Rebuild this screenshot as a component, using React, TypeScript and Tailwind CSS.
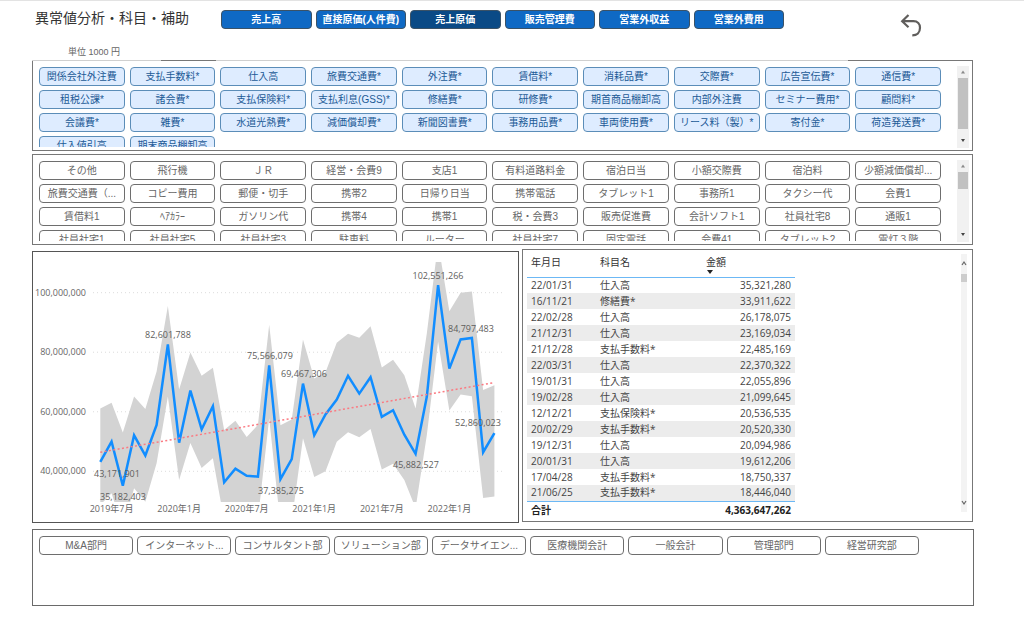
import React, { useState } from "react";

const categories = ["売上高", "直接原価(人件費)", "売上原価", "販売管理費", "営業外収益", "営業外費用"];

const accounts = [
  "関係会社外注費", "支払手数料*", "仕入高", "旅費交通費*", "外注費*", "賃借料*", "消耗品費*", "交際費*", "広告宣伝費*", "通信費*",
  "租税公課*", "諸会費*", "支払保険料*", "支払利息(GSS)*", "修繕費*", "研修費*", "期首商品棚卸高", "内部外注費", "セミナー費用*", "顧問料*",
  "会議費*", "雑費*", "水道光熱費*", "減価償却費*", "新聞図書費*", "事務用品費*", "車両使用費*", "リース料（製）*", "寄付金*", "荷造発送費*",
  "仕入値引高", "期末商品棚卸高",
];

const subAccounts = [
  "その他", "飛行機", "ＪＲ", "経営・会費9", "支店1", "有料道路料金", "宿泊日当", "小額交際費", "宿泊料", "少額減価償却...",
  "旅費交通費（...", "コピー費用", "郵便・切手", "携帯2", "日帰り日当", "携帯電話", "タブレット1", "事務所1", "タクシー代", "会費1",
  "賃借料1", "ﾍｱｶﾗｰ", "ガソリン代", "携帯4", "携帯1", "税・会費3", "販売促進費", "会計ソフト1", "社員社宅8", "通販1",
  "社員社宅1", "社員社宅5", "社員社宅3", "駐車料", "ルーター", "社員社宅7", "固定電話", "会費41", "タブレット2", "電灯３階",
];

const departments = [
  "M&A部門", "インターネット...", "コンサルタント部", "ソリューション部", "データサイエン...", "医療機関会計", "一般会計", "管理部門", "経営研究部",
];

const rows = [
  ["22/01/31", "仕入高", "35,321,280"],
  ["16/11/21", "修繕費*", "33,911,622"],
  ["22/02/28", "仕入高", "26,178,075"],
  ["21/12/31", "仕入高", "23,169,034"],
  ["21/12/28", "支払手数料*", "22,485,169"],
  ["22/03/31", "仕入高", "22,370,322"],
  ["19/01/31", "仕入高", "22,055,896"],
  ["19/02/28", "仕入高", "21,099,645"],
  ["12/12/21", "支払保険料*", "20,536,535"],
  ["20/02/29", "支払手数料*", "20,520,330"],
  ["19/12/31", "仕入高", "20,094,986"],
  ["20/01/31", "仕入高", "19,612,206"],
  ["17/04/28", "支払手数料*", "18,750,337"],
  ["21/06/25", "支払手数料*", "18,446,040"],
];

// monthly values in millions of yen, 2019/06 - 2022/05
const actual = [
  43.17, 50, 35.18, 52.1, 45.3, 55.6, 82.6, 49.6, 67.1, 54.1, 61.9, 36.3, 40.9, 38.5, 38.2, 75.57, 37.39, 44.1,
  69.47, 52.1, 59.1, 64.1, 72.1, 66.1, 71.6, 58.3, 60.5, 52.3, 45.88, 65.1, 102.55, 74.5, 84.3, 84.8, 46.4, 52.86,
];
const upper = [
  61.1, 63, 53, 65.1, 60.9, 73.5, 95.5, 67.5, 79.9, 72.1, 74.8, 53.9, 57, 51.5, 55.6, 89.2, 55.5, 57.4,
  84.3, 71.2, 73.3, 83.2, 86.2, 84.9, 88.7, 74.9, 77.5, 72.3, 61.1, 86.4, 116.7, 93.8, 100, 100.4, 67.3, 68.9,
];
const lower = [
  28.7, 32.6, 20.9, 34.3, 29.8, 42.7, 65.1, 37.1, 49.5, 41.1, 44.4, 23.5, 20.9, 20.9, 23.9, 57.8, 22, 23.3,
  51.1, 38.1, 40, 49.9, 53.1, 51.4, 54.2, 40.6, 42.5, 37.1, 27.6, 52.2, 83.6, 60.4, 65.8, 65.2, 31, 31.5,
];

const px = (i: number) => 67.3 + i * 11.26;
const py = (v: number) => 219.3 - (v - 40) * 2.977;
const toPoints = (values: number[]) => values.map((v, i) => `${px(i)},${py(v)}`);

const dataLabels = [
  { text: "43,171,901", x: 84, y: 225 },
  { text: "35,182,403", x: 90, y: 248 },
  { text: "82,601,788", x: 135, y: 86 },
  { text: "75,566,079", x: 237, y: 107 },
  { text: "69,467,306", x: 271, y: 125 },
  { text: "37,385,275", x: 248, y: 242 },
  { text: "45,882,527", x: 383, y: 216 },
  { text: "102,551,266", x: 405, y: 27 },
  { text: "84,797,483", x: 438, y: 80 },
  { text: "52,860,023", x: 445, y: 174 },
];

const TrendChart = () => (
  <svg viewBox="0 0 485 270" className="block h-full w-full" role="img" aria-label="金額の推移">
    <clipPath id="plot">
      <rect x="60" y="10" width="412" height="240" />
    </clipPath>
    {[100, 80, 60, 40].map((v) => (
      <g key={v}>
        <line x1="60" x2="469" y1={py(v)} y2={py(v)} stroke="#dcdcdc" strokeDasharray="1 3" />
        <text x="53" y={py(v) + 3} textAnchor="end" fontSize="9" fill="#666">
          {v},000,000
        </text>
      </g>
    ))}
    <g clipPath="url(#plot)">
      <polygon points={[...toPoints(upper), ...toPoints(lower).reverse()].join(" ")} fill="#d3d3d3" />
    </g>
    <polyline points={toPoints(actual).join(" ")} fill="none" stroke="#118dff" strokeWidth="2.5" />
    <line x1={px(0)} y1={py(46.4)} x2={px(35)} y2={py(69.8)} stroke="#fb7a82" strokeWidth="1.5" strokeDasharray="2 2.4" />
    {dataLabels.map((label) => (
      <text key={label.text} x={label.x} y={label.y} textAnchor="middle" fontSize="9" fill="#605e5c">
        {label.text}
      </text>
    ))}
    {["2019年7月", "2020年1月", "2020年7月", "2021年1月", "2021年7月", "2022年1月"].map((month, i) => (
      <text key={month} x={px(1 + i * 6)} y="260" textAnchor="middle" fontSize="9" fill="#666">
        {month}
      </text>
    ))}
  </svg>
);

const ScrollTrack = ({ thumb }: { thumb: string }) => (
  <div aria-hidden="true" className="flex h-[82px] w-3 flex-col items-center bg-[#f1f1f1]">
    <svg viewBox="0 0 12 12" className="h-3 w-3 shrink-0">
      <path d="M6 4.5 8 7.5H4Z" fill="#8a8a8a" />
    </svg>
    <div className={`w-[10px] bg-[#c1c1c1] ${thumb}`}></div>
    <svg viewBox="0 0 12 12" className="mt-auto h-4 w-3 shrink-0">
      <path d="M6 8 8 5H4Z" fill="#444" />
    </svg>
  </div>
);

type TileProps = { label: string; blue?: boolean };

const Tile = ({ label, blue }: TileProps) => (
  <button
    type="button"
    className={`h-[19px] overflow-hidden rounded border text-center text-[10px] leading-4 whitespace-nowrap ${
      blue ? "border-[#5b8db8] bg-[#deecff] text-[#1c5a96]" : "border-[#6e6e6e] bg-white text-[#666]"
    }`}
  >
    {label}
  </button>
);

const App = () => {
  const [selected, setSelected] = useState<string>("売上原価");

  return (
    <div className="min-h-screen border-t border-[#e3e3e3] bg-white pr-[50px] pl-8 font-['Liberation_Sans','Noto_Sans_CJK_JP',sans-serif]">
      <header>
        <div className="flex h-[35px] items-start pt-[9px] pl-[3px]">
          <h1 className="w-[186px] shrink-0 text-[14px] leading-4 whitespace-nowrap text-[#333]">異常値分析・科目・補助</h1>
          <div className="grid w-[563px] grid-cols-6 gap-1">
            {categories.map((name) => (
              <button
                key={name}
                type="button"
                aria-pressed={selected === name}
                onClick={() => setSelected(name)}
                className={`h-[19px] rounded border border-[#3b5266] text-center text-[10px] leading-4 font-bold whitespace-nowrap text-white ${
                  selected === name ? "bg-[#0a4a86]" : "bg-[#0f69c4]"
                }`}
              >
                {name}
              </button>
            ))}
          </div>
          <button type="button" aria-label="戻る" className="mt-1 mr-[52px] ml-auto">
            <svg viewBox="0 0 22 23" className="block h-[23px] w-[22px]" fill="none" stroke="#605e5c" strokeWidth="2.2">
              <path d="M8.5 1 2.2 7.2 8.5 13.2M2.2 7.2H13.5C17.5 7.2 20 10 20 13.8C20 18.5 17 21.4 12.3 21.4" />
            </svg>
          </button>
        </div>
        <p className="mt-2 pl-9 text-[9px] leading-4 text-[#666]">単位 1000 円</p>
      </header>

      <main>
        <div className="pr-px">
          <section>
            {/* top rule is only dark over two stretches */}
            <div className="flex h-px bg-[#d0d0d0]">
              <div className="ml-[129px] w-[55px] bg-[#777]"></div>
              <div className="ml-auto w-[125px] bg-[#777]"></div>
            </div>
            <div className="flex h-[90px] border border-t-0 border-[#777] pt-[5px] pr-[3px] pl-[6px]">
              <div className="mr-4 grid h-[81px] flex-1 grid-cols-10 content-start gap-x-[5px] gap-y-1 overflow-hidden pt-px">
                {accounts.map((name) => (
                  <Tile key={name} label={name} blue />
                ))}
              </div>
              <ScrollTrack thumb="h-[51px]" />
            </div>
          </section>

          <section className="mt-[3px] flex h-[91px] border border-[#777] pt-[5px] pr-[3px] pl-[6px]">
            <div className="mr-4 grid h-[81px] flex-1 grid-cols-10 content-start gap-x-[5px] gap-y-1 overflow-hidden pt-px">
              {subAccounts.map((name) => (
                <Tile key={name} label={name} />
              ))}
            </div>
            <ScrollTrack thumb="h-[17px]" />
          </section>

          <div className="mt-1 grid grid-cols-[487fr_451fr] gap-[3px] font-['Open_Sans','Noto_Sans_CJK_JP',sans-serif]">
            <section className="mt-[2px] h-[272px] border border-[#555]">
              <TrendChart />
            </section>

            <section className="flex h-[273px] justify-between border border-[#777] pr-[5px] pl-[4px]">
              <table className="h-fit w-[268px] table-fixed border-collapse text-[10px] text-[#444]">
                <thead>
                  <tr className="h-[27px] border-b border-[#6cb8f5] text-left align-top leading-4 text-[#333]">
                    <th className="w-[69px] pt-1 pl-1 font-normal">年月日</th>
                    <th className="w-[106px] pt-1 pl-1 font-normal">科目名</th>
                    <th className="w-[93px] pt-1 pl-1 font-normal">
                      金額
                      <svg viewBox="0 0 6 4" className="ml-px block h-1 w-[6px]">
                        <path d="M0 0h6L3 4Z" fill="#222" />
                      </svg>
                    </th>
                  </tr>
                </thead>
                <tbody>
                  {rows.map(([date, name, amount]) => (
                    <tr key={date + name} className="h-4 leading-[15px] even:bg-[#ececec]">
                      <td className="p-0 pl-1">{date}</td>
                      <td className="p-0 pl-1">{name}</td>
                      <td className="p-0 pr-1 text-right">{amount}</td>
                    </tr>
                  ))}
                </tbody>
                <tfoot>
                  <tr className="border-t border-[#6cb8f5] leading-4 font-bold text-[#222]">
                    <td className="p-0 pl-1">合計</td>
                    <td></td>
                    <td className="p-0 pr-1 text-right">4,363,647,262</td>
                  </tr>
                </tfoot>
              </table>
              <div aria-hidden="true" className="mt-1 flex h-[258px] w-[6px] flex-col bg-[#f3f3f3]">
                <svg viewBox="0 0 6 20" className="h-5 w-[6px]" fill="none" stroke="#666" strokeWidth="1.2">
                  <path d="M1 11 3 8 5 11" />
                </svg>
                <div className="h-2 bg-[#cdcdcd]"></div>
                <svg viewBox="0 0 6 20" className="mt-auto h-5 w-[6px]" fill="none" stroke="#666" strokeWidth="1.2">
                  <path d="M1 9 3 12 5 9" />
                </svg>
              </div>
            </section>
          </div>
        </div>

        <section className="mt-[6px] h-[77px] border border-[#6a6a6a] py-[6px] pr-[54px] pl-[6px]">
          <div className="grid grid-cols-9 gap-1">
            {departments.map((name) => (
              <Tile key={name} label={name} />
            ))}
          </div>
        </section>
      </main>
    </div>
  );
};

export default App;
